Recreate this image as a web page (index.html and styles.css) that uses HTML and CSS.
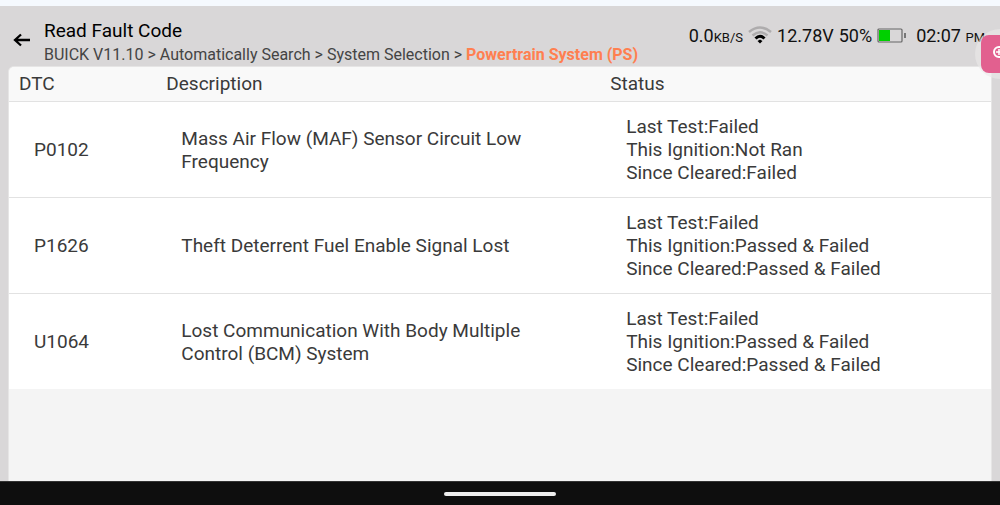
FILE: index.html
```
<!DOCTYPE html>
<html lang="en">
<head>
    <meta charset="UTF-8">
    <meta name="viewport" content="width=device-width, initial-scale=1">
    <title>Read Fault Code</title>
    <link rel="stylesheet" href="styles.css">
</head>
<body>
    <header class="topbar">
        <button class="back" type="button" aria-label="Back">
            <svg width="18" height="14" viewBox="0 0 18 14" fill="none" stroke="#000" stroke-width="2.300">
                <path d="M17 7H2M8 1.500L2 7l6 5.500"/>
            </svg>
        </button>
        <div class="heading">
            <h1>Read Fault Code</h1>
            <nav class="breadcrumb">BUICK V11.10 &gt; Automatically Search &gt; System Selection &gt; <strong>Powertrain System (PS)</strong></nav>
        </div>
        <div class="device-status">
            <span>0.0<small>KB/S</small></span>
            <svg class="wifi" width="24" height="18" viewBox="0 0 24 18" fill="none" stroke-width="2.500">
                <path d="M1 6Q12 -3 23 6" stroke="#aeacad"/>
                <path d="M4.500 9.500Q12 3 19.500 9.500" stroke="#aeacad"/>
                <path d="M7.500 12.500Q12 8 16.500 12.500" stroke="#000" stroke-width="3"/>
                <path d="M12 13.500l2.500 1.500-2.500 2.500-2.500-2.500z" fill="#000"/>
            </svg>
            <span class="voltage">12.78V</span>
            <span class="percent">50%</span>
            <svg class="battery" width="30" height="15" viewBox="0 0 30 15">
                <rect x="1" y="1" width="24" height="13" rx="1" fill="none" stroke="#666" stroke-width="1.200"/>
                <rect x="2" y="2" width="11" height="11" fill="#00d000"/>
                <rect x="27" y="5" width="2" height="5" fill="#777"/>
            </svg>
            <span class="clock">02:07 <small>PM</small></span>
        </div>
    </header>

    <main class="panel">
        <table class="codes">
            <thead>
                <tr>
                    <th class="col-dtc">DTC</th>
                    <th class="col-desc">Description</th>
                    <th>Status</th>
                </tr>
            </thead>
            <tbody>
                <tr>
                    <td>P0102</td>
                    <td>Mass Air Flow (MAF) Sensor Circuit Low Frequency</td>
                    <td>Last Test:Failed<br>This Ignition:Not Ran<br>Since Cleared:Failed</td>
                </tr>
                <tr>
                    <td>P1626</td>
                    <td>Theft Deterrent Fuel Enable Signal Lost</td>
                    <td>Last Test:Failed<br>This Ignition:Passed &amp; Failed<br>Since Cleared:Passed &amp; Failed</td>
                </tr>
                <tr>
                    <td>U1064</td>
                    <td>Lost Communication With Body Multiple Control (BCM) System</td>
                    <td>Last Test:Failed<br>This Ignition:Passed &amp; Failed<br>Since Cleared:Passed &amp; Failed</td>
                </tr>
            </tbody>
        </table>
    </main>

    <footer class="navbar">
        <div class="handle"></div>
    </footer>

    <!-- floating assistant, half off the right edge -->
    <button class="floating" type="button" aria-label="Open assistant">
        <svg width="38" height="38" viewBox="0 0 38 38" fill="none" stroke="#fff" stroke-width="2">
            <rect width="38" height="38" rx="8" fill="#e2608f" stroke="none"/>
            <circle cx="18" cy="17" r="5"/>
            <path d="M15 17h6M18 14v6" stroke-width="1.500"/>
        </svg>
    </button>
</body>
</html>
```

FILE: styles.css
```
* {
    box-sizing: border-box;
}
body {
    margin: 0;
    min-height: 100vh;
    display: flex;
    flex-direction: column;
    overflow: hidden;
    position: relative;
    border-top: 6px solid #f5f9fe;
    background-color: #d9d7d8;
    color: #3a3a3a;
    font-family: Roboto, sans-serif;
    font-size: 19px;
}
button {
    border: none;
    padding: 0;
    background: none;
    cursor: pointer;
}
.topbar {
    display: flex;
    align-items: flex-start;
    padding: 12px 15px 0 13px;
    color: #111;
    white-space: nowrap;
}
.back {
    display: flex;
    margin: 15px 13px 0 0;
}
.heading {
    flex: 1;
}
h1 {
    margin: 0;
    font-size: 19px;
    font-weight: 400;
    line-height: 26px;
    color: #000;
}
.breadcrumb {
    font-size: 16px;
    line-height: 22px;
    color: #444;
}
.breadcrumb strong {
    color: #ff7f50;
}
.device-status {
    display: flex;
    align-items: center;
    height: 34px;
    font-size: 18px;
}
.device-status small {
    font-size: 13px;
}
.wifi {
    margin: 0 5px;
}
.percent {
    margin: 0 5px;
}
.clock {
    margin-left: 9px;
}
.panel {
    flex: 1;
    margin: 0 8px;
    background-color: #f4f4f4;
    border: 1px solid #e6e5e5;
    border-bottom: none;
    border-radius: 6px 6px 0 0;
    overflow: hidden;
}
.codes {
    width: 100%;
    table-layout: fixed;
    border-collapse: collapse;
    line-height: 23px;
}
.col-dtc {
    width: 15%;
}
.col-desc {
    width: 45%;
}
.codes th {
    padding: 5px 10px 6px;
    background-color: #f9f9f9;
    font-weight: 400;
    text-align: left;
}
.codes td {
    padding: 13px 40px 13px 25px;
    background-color: #fff;
    border-top: 1px solid #e2e2e2;
}
.codes th:last-child {
    padding-left: 12px;
}
.codes td:last-child {
    padding-left: 28px;
}
.navbar {
    display: flex;
    justify-content: center;
    align-items: center;
    height: 24px;
    background-color: #0e0e0e;
    border-top: 1px solid #333;
}
.handle {
    width: 112px;
    height: 4px;
    border-radius: 2px;
    background-color: #eee;
}
.floating {
    position: absolute;
    top: 23px;
    right: -25px;
    width: 50px;
    height: 50px;
    padding: 6px;
    border-radius: 50%;
    background-color: rgba(235, 233, 234, 0.6);
}
```
